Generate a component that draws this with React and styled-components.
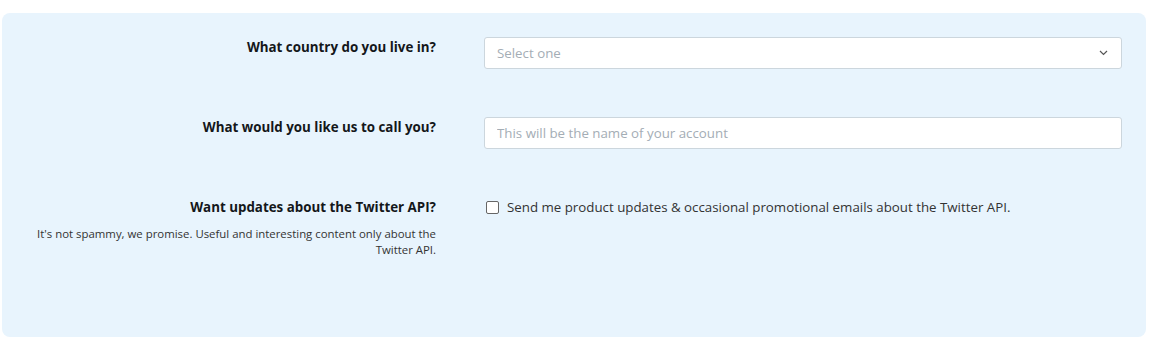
import React from 'react';
import styled, { createGlobalStyle } from 'styled-components';

const GlobalStyle = createGlobalStyle`
  html, body {
    margin: 0;
    padding: 0;
    background: #fff;
  }
  body {
    font-family: "Open Sans", "Noto Sans", sans-serif;
    color: #14171a;
  }
`;

const Page = styled.div`
  padding: 13px 16px 15px 2px;
`;

const Panel = styled.form`
  background-color: #e8f4fd;
  border-radius: 8px;
  padding: 24px 24px 0 24px;
  height: 324px;
  box-sizing: border-box;
  display: grid;
  grid-template-columns: 410px 1fr;
  column-gap: 48px;
  row-gap: 48px;
  align-content: start;
`;

const LabelCol = styled.div`
  text-align: right;
`;

const Label = styled.label`
  display: block;
  font-size: 13.35px;
  font-weight: 700;
  line-height: 20px;
  color: #14171a;
`;

const Help = styled.p`
  margin: 9px 0 0;
  font-size: 11.4px;
  line-height: 16px;
  color: #333;
`;

const Field = styled.div`
  position: relative;
`;

const TextInput = styled.input`
  width: 100%;
  height: 32px;
  box-sizing: border-box;
  border: 1px solid #ccd6dd;
  border-radius: 3px;
  background: #fff;
  padding: 0 12px;
  font-family: "Open Sans", "Noto Sans", sans-serif;
  font-size: 13.3px;
  color: #14171a;
  outline: none;

  &::placeholder {
    color: #a4adb5;
  }
`;

const Select = styled.div`
  display: flex;
  align-items: center;
  justify-content: space-between;
  height: 32px;
  box-sizing: border-box;
  border: 1px solid #ccd6dd;
  border-radius: 3px;
  background: #fff;
  padding: 0 12px;
  font-size: 13.3px;
  color: #a4adb5;
`;

const Chevron = styled.svg`
  width: 9px;
  height: 6px;
  margin-right: 1px;
`;

const CheckRow = styled.label`
  display: flex;
  align-items: center;
  gap: 8px;
  height: 20px;
  font-size: 13.3px;
  color: #333;
`;

const Box = styled.span`
  width: 11px;
  height: 11px;
  margin-left: 2px;
  border: 1px solid #666;
  border-radius: 2px;
  background: #fff;
  flex-shrink: 0;
`;

const App = () => {
  return (
    <>
      <GlobalStyle />
      <Page>
        <Panel>
          <LabelCol>
            <Label>What country do you live in?</Label>
          </LabelCol>
          <Field>
            <Select>
              <span>Select one</span>
              <Chevron viewBox="0 0 9 6">
                <path d="M1 1l3.5 3.5L8 1" fill="none" stroke="#555" strokeWidth="1.2" />
              </Chevron>
            </Select>
          </Field>

          <LabelCol>
            <Label>What would you like us to call you?</Label>
          </LabelCol>
          <Field>
            <TextInput placeholder="This will be the name of your account" />
          </Field>

          <LabelCol>
            <Label>Want updates about the Twitter API?</Label>
            <Help>
              It's not spammy, we promise. Useful and interesting content only about the Twitter API.
            </Help>
          </LabelCol>
          <Field>
            <CheckRow>
              <Box />
              Send me product updates &amp; occasional promotional emails about the Twitter API.
            </CheckRow>
          </Field>
        </Panel>
      </Page>
    </>
  );
};

export default App;
